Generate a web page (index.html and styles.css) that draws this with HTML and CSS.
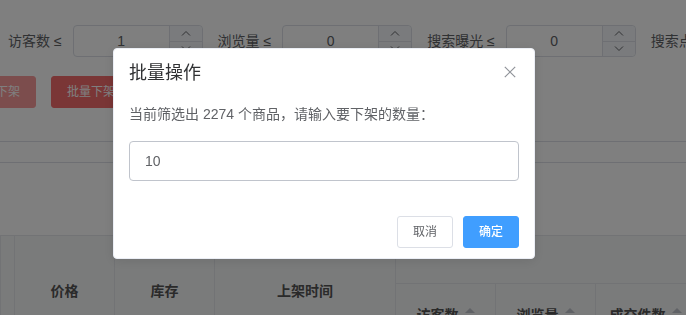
FILE: index.html
```html
<!DOCTYPE html>
<html lang="zh-CN">
<head>
<meta charset="utf-8">
<title>批量操作</title>
<link rel="stylesheet" href="styles.css">
</head>
<body>
<div class="page">
  <div class="filters">
    <div class="fitem">
      <span class="flabel">访客数 ≤</span>
      <div class="num">
        <span class="num-val">1</span>
        <div class="num-ctrl">
          <span class="num-btn"><svg width="10" height="6" viewBox="0 0 10 6"><path d="M1 5.5 L5 1.5 L9 5.5" fill="none" stroke="#606266" stroke-width="1"/></svg></span>
          <span class="num-btn num-btn-down"><svg width="10" height="6" viewBox="0 0 10 6"><path d="M1 0.5 L5 4.5 L9 0.5" fill="none" stroke="#606266" stroke-width="1"/></svg></span>
        </div>
      </div>
    </div>
    <div class="fitem">
      <span class="flabel">浏览量 ≤</span>
      <div class="num">
        <span class="num-val">0</span>
        <div class="num-ctrl">
          <span class="num-btn"><svg width="10" height="6" viewBox="0 0 10 6"><path d="M1 5.5 L5 1.5 L9 5.5" fill="none" stroke="#606266" stroke-width="1"/></svg></span>
          <span class="num-btn num-btn-down"><svg width="10" height="6" viewBox="0 0 10 6"><path d="M1 0.5 L5 4.5 L9 0.5" fill="none" stroke="#606266" stroke-width="1"/></svg></span>
        </div>
      </div>
    </div>
    <div class="fitem">
      <span class="flabel">搜索曝光 ≤</span>
      <div class="num">
        <span class="num-val">0</span>
        <div class="num-ctrl">
          <span class="num-btn"><svg width="10" height="6" viewBox="0 0 10 6"><path d="M1 5.5 L5 1.5 L9 5.5" fill="none" stroke="#606266" stroke-width="1"/></svg></span>
          <span class="num-btn num-btn-down"><svg width="10" height="6" viewBox="0 0 10 6"><path d="M1 0.5 L5 4.5 L9 0.5" fill="none" stroke="#606266" stroke-width="1"/></svg></span>
        </div>
      </div>
    </div>
    <div class="fitem">
      <span class="flabel">搜索点击 ≤</span>
      <div class="num">
        <span class="num-val">0</span>
        <div class="num-ctrl">
          <span class="num-btn"><svg width="10" height="6" viewBox="0 0 10 6"><path d="M1 5.5 L5 1.5 L9 5.5" fill="none" stroke="#606266" stroke-width="1"/></svg></span>
          <span class="num-btn num-btn-down"><svg width="10" height="6" viewBox="0 0 10 6"><path d="M1 0.5 L5 4.5 L9 0.5" fill="none" stroke="#606266" stroke-width="1"/></svg></span>
        </div>
      </div>
    </div>
  </div>

  <div class="actions">
    <button class="btn btn-danger-light">一键下架</button>
    <button class="btn btn-danger">批量下架</button>
  </div>

  <div class="divider divider-a"></div>
  <div class="divider divider-b"></div>

  <table class="grid">
    <colgroup>
      <col class="c-sel"><col class="c-std"><col class="c-std"><col class="c-time"><col class="c-std"><col class="c-std"><col class="c-std"><col class="c-std">
    </colgroup>
    <tr class="row-top">
      <th rowspan="2"></th>
      <th rowspan="2">价格</th>
      <th rowspan="2">库存</th>
      <th rowspan="2">上架时间</th>
      <th colspan="4"></th>
    </tr>
    <tr class="row-sub">
      <th><span class="th-in">访客数<span class="caret"><i class="up"></i><i class="down"></i></span></span></th>
      <th><span class="th-in">浏览量<span class="caret"><i class="up"></i><i class="down"></i></span></span></th>
      <th><span class="th-in">成交件数<span class="caret"><i class="up"></i><i class="down"></i></span></span></th>
      <th><span class="th-in">成交金额<span class="caret"><i class="up"></i><i class="down"></i></span></span></th>
    </tr>
  </table>
</div>

<div class="overlay"></div>

<div class="msgbox">
  <div class="msgbox-header">
    <span class="msgbox-title">批量操作</span>
    <span class="msgbox-close"><svg width="12" height="12" viewBox="0 0 12 12"><path d="M0.8 0.8 L11.2 11.2 M11.2 0.8 L0.8 11.2" stroke="#909399" stroke-width="1.2" fill="none"/></svg></span>
  </div>
  <div class="msgbox-content">
    <p class="msgbox-message">当前筛选出 2274 个商品，请输入要下架的数量：</p>
    <div class="msgbox-input"><span class="input-val">10</span></div>
    <div class="msgbox-error"></div>
  </div>
  <div class="msgbox-btns">
    <button class="btn btn-default">取消</button>
    <button class="btn btn-primary">确定</button>
  </div>
</div>
</body>
</html>
```

FILE: styles.css
```css
* { box-sizing: border-box; }

html, body {
  margin: 0;
  padding: 0;
  width: 686px;
  height: 315px;
  overflow: hidden;
  background: #fff;
  font-family: "Liberation Sans", "Noto Sans CJK SC", sans-serif;
  font-size: 14px;
  color: #606266;
}

.page {
  width: 686px;
  height: 315px;
  overflow: hidden;
}

/* filters */
.filters {
  display: flex;
  align-items: center;
  margin-top: 25px;
  padding-left: 8px;
  height: 32px;
  white-space: nowrap;
}
.fitem {
  display: flex;
  align-items: center;
  flex-shrink: 0;
  margin-right: 15px;
}
.flabel {
  margin-right: 11px;
  line-height: 32px;
  color: #606266;
}
.num {
  position: relative;
  display: flex;
  width: 130px;
  height: 32px;
  border: 1px solid #dcdfe6;
  border-radius: 4px;
  background: #fff;
}
.num-val {
  flex: 1;
  text-align: center;
  padding-left: 15px;
  padding-right: 15px;
  line-height: 30px;
  color: #606266;
}
.num-ctrl {
  width: 33px;
  display: flex;
  flex-direction: column;
  border-left: 1px solid #dcdfe6;
  background: #f5f7fa;
  border-radius: 0 4px 4px 0;
}
.num-btn {
  flex: 1;
  display: flex;
  align-items: center;
  justify-content: center;
}
.num-btn-down {
  border-top: 1px solid #dcdfe6;
}

/* action buttons */
.actions {
  display: flex;
  gap: 15px;
  margin-top: 19px;
  margin-left: -44px;
  height: 32px;
}
.btn {
  font-family: inherit;
  font-size: 12px;
  line-height: 12px;
  padding: 9px 15px;
  border-radius: 3px;
  border: 1px solid #dcdfe6;
  background: #fff;
  color: #606266;
  white-space: nowrap;
  cursor: pointer;
  height: 32px;
}
.btn-danger {
  background: #f56c6c;
  border-color: #f56c6c;
  color: #fff;
}
.btn-danger-light {
  background: #f89b9b;
  border-color: #f89b9b;
  color: #fff;
}
.btn-primary {
  background: #409eff;
  border-color: #409eff;
  color: #fff;
  font-weight: 500;
}
.btn-default {
  background: #fff;
  color: #606266;
}

/* dividers */
.divider {
  height: 0;
  border-top: 1px solid #dcdfe6;
  width: 100%;
}
.divider-a { margin-top: 33px; }
.divider-b { margin-top: 20px; }

/* table header */
.grid {
  margin-top: 72px;
  border-collapse: collapse;
  table-layout: fixed;
  width: 795px;
  background: #f5f6f7;
}
.c-sel { width: 14px; }
.c-std { width: 100px; }
.c-time { width: 181px; }
.grid th {
  border: 1px solid #e4e6ea;
  padding: 0;
  font-weight: bold;
  font-size: 14px;
  color: #555;
  text-align: center;
  vertical-align: middle;
}
.row-top { height: 48px; }
.row-sub { height: 60px; }
.th-in {
  display: inline-flex;
  align-items: center;
  gap: 6px;
}
.caret {
  display: inline-flex;
  flex-direction: column;
  gap: 2px;
}
.caret i {
  display: block;
  width: 0;
  height: 0;
  border-left: 5px solid transparent;
  border-right: 5px solid transparent;
}
.caret .up { border-bottom: 5px solid #c0c4cc; }
.caret .down { border-top: 5px solid #c0c4cc; }

/* overlay + message box */
.overlay {
  position: fixed;
  inset: 0;
  background: rgba(0, 0, 0, 0.5);
}
.msgbox {
  position: fixed;
  left: 113px;
  top: 48px;
  width: 422px;
  background: #fff;
  border: 1px solid #ebeef5;
  border-radius: 4px;
  padding-bottom: 10px;
  box-shadow: 0 2px 12px rgba(0, 0, 0, 0.1);
}
.msgbox-header {
  position: relative;
  padding: 15px 15px 10px;
}
.msgbox-title {
  display: block;
  font-size: 18px;
  line-height: 18px;
  color: #303133;
}
.msgbox-close {
  position: absolute;
  top: 17px;
  right: 18px;
  width: 12px;
  height: 12px;
  display: flex;
}
.msgbox-content {
  padding: 10px 15px;
}
.msgbox-message {
  margin: 0;
  line-height: 24px;
  font-size: 14px;
  color: #606266;
}
.msgbox-input {
  margin-top: 15px;
  height: 40px;
  border: 1px solid #c0c4cc;
  border-radius: 4px;
  padding: 0 15px;
  display: flex;
  align-items: center;
}
.input-val {
  font-size: 14px;
  color: #606266;
}
.msgbox-error {
  margin-top: 2px;
  min-height: 18px;
}
.msgbox-btns {
  padding: 5px 15px 0;
  display: flex;
  justify-content: flex-end;
  gap: 10px;
}
.msgbox-btns .btn {
  width: 56px;
  padding: 9px 0;
  text-align: center;
}
```
